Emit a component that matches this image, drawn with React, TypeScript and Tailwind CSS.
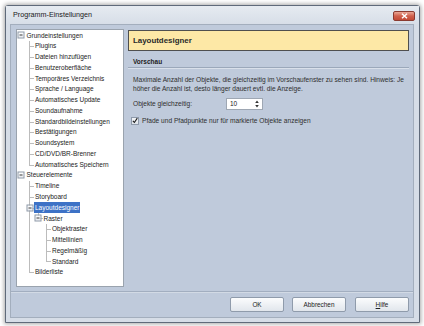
import React from "react";

type Row = {
  label: string;
  level: number;
  exp?: boolean;
  last?: boolean;
  sel?: boolean;
  guides?: number[];
};

const rows: Row[] = [
  { label: "Grundeinstellungen", level: 0, exp: true },
  { label: "Plugins", level: 1 },
  { label: "Dateien hinzufügen", level: 1 },
  { label: "Benutzeroberfläche", level: 1 },
  { label: "Temporäres Verzeichnis", level: 1 },
  { label: "Sprache / Language", level: 1 },
  { label: "Automatisches Update", level: 1 },
  { label: "Soundaufnahme", level: 1 },
  { label: "Standardbildeinstellungen", level: 1 },
  { label: "Bestätigungen", level: 1 },
  { label: "Soundsystem", level: 1 },
  { label: "CD/DVD/BR-Brenner", level: 1 },
  { label: "Automatisches Speichern", level: 1, last: true },
  { label: "Steuerelemente", level: 0, exp: true },
  { label: "Timeline", level: 1 },
  { label: "Storyboard", level: 1 },
  { label: "Layoutdesigner", level: 1, exp: true, sel: true },
  { label: "Raster", level: 2, exp: true, last: true, guides: [1] },
  { label: "Objektraster", level: 3, guides: [1] },
  { label: "Mittellinien", level: 3, guides: [1] },
  { label: "Regelmäßig", level: 3, guides: [1] },
  { label: "Standard", level: 3, last: true, guides: [1] },
  { label: "Bilderliste", level: 1, last: true },
];

const lineX = (n: number) => 3.5 + 8.5 * n;
const textX = (n: number) => lineX(n) + 6;

function Expander() {
  return (
    <span className="absolute top-1/2 -translate-x-1/2 -translate-y-1/2 w-[7px] h-[7px] border border-[#8e99a8] bg-gradient-to-b from-white to-[#e6e9ee] flex items-center justify-center">
      <span className="block w-[3px] h-px bg-[#3a3a3a]" />
    </span>
  );
}

function TreeRow({ r }: { r: Row }) {
  const lx = lineX(r.level);
  const tx = textX(r.level);
  return (
    <div className="relative h-[10.77px]">
      {(r.guides || []).map((g) => (
        <span
          key={g}
          className="absolute top-0 bottom-0 w-px bg-[#bcbcbc]"
          style={{ left: lineX(g) }}
        />
      ))}
      {r.level > 0 && (
        <>
          <span
            className={`absolute top-0 w-px bg-[#bcbcbc] ${r.last ? "h-1/2" : "bottom-0"}`}
            style={{ left: lx }}
          />
          <span
            className="absolute top-1/2 h-px bg-[#bcbcbc]"
            style={{ left: lx, width: tx - lx - 1 }}
          />
        </>
      )}
      {r.exp && (
        <span className="absolute top-0 bottom-0" style={{ left: lx + 0.5 }}>
          <Expander />
        </span>
      )}
      <span
        className={`absolute top-0 h-full flex items-center whitespace-nowrap px-[1px] ${
          r.sel ? "bg-[#3d72c6] text-white" : "text-[#222]"
        }`}
        style={{ left: tx - 1 }}
      >
        {r.label}
      </span>
    </div>
  );
}

function Button({ children }: { children: React.ReactNode }) {
  return (
    <div className="w-[54px] h-[15px] rounded-[2px] border border-[#8f9bab] bg-gradient-to-b from-[#fbfcfd] to-[#e1e6ec] flex items-center justify-center text-[6.4px] text-[#222]">
      {children}
    </div>
  );
}

export default function App() {
  return (
    <div className="w-[424px] h-[326px] bg-white pt-[5px] pl-[5px] font-['Liberation_Sans',Arial,sans-serif] overflow-hidden">
      <div className="w-[415px] h-[318px] border border-[#5f6a7a] rounded-t-[3px] bg-[#d6dde7] shadow-[0_0_4px_1px_rgba(0,0,0,0.35)] flex flex-col">
        {/* title bar */}
        <div className="h-[18px] flex items-center justify-between pl-[7px] pr-[4px] bg-gradient-to-b from-[#e6ebf1] to-[#d7dee8]">
          <span className="text-[7.2px] text-[#1a1a1a] pt-[1px]">Programm-Einstellungen</span>
          <div className="w-[22px] h-[10px] mt-[1px] rounded-[2px] border border-[#8a3a30] bg-gradient-to-b from-[#e9a796] via-[#d0604c] to-[#c24a36] flex items-center justify-center">
            <svg width="7" height="6" viewBox="0 0 7 6">
              <path d="M1 0.8 L6 5.2 M6 0.8 L1 5.2" stroke="white" strokeWidth="1.5" />
            </svg>
          </div>
        </div>
        {/* content */}
        <div className="ml-[4px] w-[404px] h-[294px] border border-[#a3aebd] bg-[#bfcadb] flex flex-col">
          <div className="h-[266px] flex pt-[4px] pl-[5px] pr-[4px] pb-[4px] gap-[4px]">
            <div className="w-[108px] h-[258px] border border-[#9aa3ae] bg-white text-[6.5px]">
              {rows.map((r, i) => (
                <TreeRow key={i} r={r} />
              ))}
            </div>
            <div className="w-[281px] flex flex-col pt-[1px]">
              <div className="h-[21px] border border-[#4f4f4f] bg-[#fde8a6] flex items-center pl-[4px] text-[7.9px] font-bold text-[#2a2a2a]">
                Layoutdesigner
              </div>
              <div className="mt-[6px] h-[10px] flex items-center pl-[5px] text-[6.5px] font-bold text-[#222]">
                Vorschau
              </div>
              <div className="h-px bg-[#9ba8ba]" />
              <div className="h-px bg-[#d9e0ea]" />
              <div className="mt-[6px] pl-[5px] pr-[2px] text-[6.6px] leading-[9px] text-[#2e2e2e]">
                Maximale Anzahl der Objekte, die gleichzeitig im Vorschaufenster zu sehen sind. Hinweis: Je
                höher die Anzahl ist, desto länger dauert evtl. die Anzeige.
              </div>
              <div className="mt-[5px] flex items-center pl-[5px] text-[6.6px] text-[#2e2e2e]">
                <span className="w-[93px]">Objekte gleichzeitig:</span>
                <div className="w-[37px] h-[12px] border border-[#9ea7b3] bg-white flex items-center justify-between pl-[3px] pr-[3px]">
                  <span className="text-[6.5px] text-[#222]">10</span>
                  <svg width="4" height="8" viewBox="0 0 4 8">
                    <path d="M2 0.5 L3.8 3 L0.2 3 Z M2 7.5 L3.8 5 L0.2 5 Z" fill="#333" />
                  </svg>
                </div>
              </div>
              <div className="mt-[6px] flex items-center pl-[3px] text-[6.6px] text-[#2e2e2e]">
                <div className="w-[8px] h-[8px] border border-[#8e9aab] bg-gradient-to-b from-[#f3f5f8] to-[#dfe4ea] flex items-center justify-center">
                  <svg width="7" height="7" viewBox="0 0 7 7">
                    <path d="M1 3.8 L2.8 5.8 L6.2 0.8" stroke="#1c1c1c" strokeWidth="1.3" fill="none" />
                  </svg>
                </div>
                <span className="ml-[3px]">Pfade und Pfadpunkte nur für markierte Objekte anzeigen</span>
              </div>
            </div>
          </div>
          <div className="h-px bg-[#a2aec0]" />
          <div className="h-px bg-[#d2dae5]" />
          <div className="flex justify-end pt-[4px] pr-[4px] gap-[8px]">
            <Button>OK</Button>
            <Button>Abbrechen</Button>
            <div className="ml-[1px]">
              <Button>
                <span>
                  <span className="underline">H</span>ilfe
                </span>
              </Button>
            </div>
          </div>
        </div>
      </div>
    </div>
  );
}
